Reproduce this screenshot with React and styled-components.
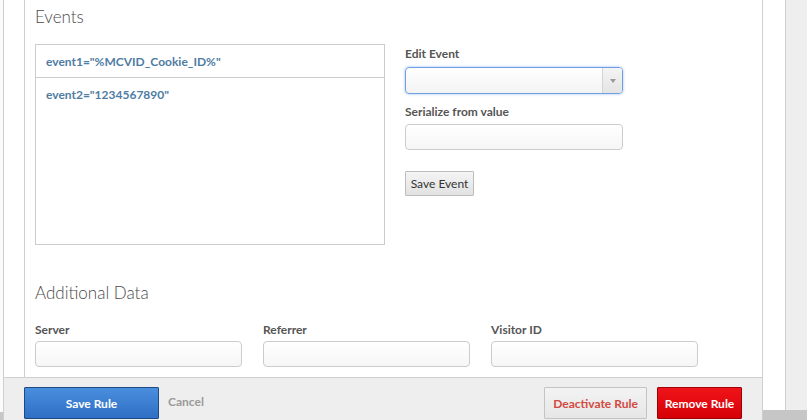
import React from "react";
import styled, { createGlobalStyle } from "styled-components";

const Global = createGlobalStyle`
  html, body { margin: 0; padding: 0; }
  body { font-family: Lato, "Open Sans", sans-serif; background: #eeeeee; }
  * { box-sizing: border-box; }
`;

const Root = styled.div`
  display: flex;
  width: 807px;
  height: 420px;
  overflow: hidden;
  background: #eeeeee;
`;

const LeftEdge = styled.div`
  width: 3px;
  display: flex;
  flex-direction: column;
  background: #fbfbfb;
`;

const ScrollStub = styled.div`
  margin-top: auto;
  height: ${(p) => p.$h}px;
  background: #c6c6c6;
`;

const Main = styled.div`
  width: 760px;
  display: flex;
  flex-direction: column;
  border-left: 1px solid #cfcfcf;
  border-right: 1px solid #cfcfcf;
  background: #fff;
`;

const ContentWrap = styled.div`
  flex: 1;
  padding-left: 20px;
  display: flex;
`;

const Content = styled.div`
  flex: 1;
  border-left: 1px solid #cfcfcf;
  padding: 6px 0 0 10px;
`;

const Heading = styled.h2`
  margin: 0;
  font-weight: 300;
  font-size: 17px;
  line-height: 22px;
  color: #4a4a4a;
`;

const EventsRow = styled.div`
  display: flex;
  gap: 20px;
  margin-top: 16px;
`;

const EventList = styled.div`
  width: 350px;
  height: 201px;
  border: 1px solid #cccccc;
`;

const EventItem = styled.div`
  height: 33px;
  padding: 0 10px;
  display: flex;
  align-items: center;
  font-size: 12px;
  font-weight: 700;
  color: #4f7ca3;
  border-bottom: ${(p) => (p.$divider ? "1px solid #cccccc" : "none")};
`;

const Form = styled.div`
  display: flex;
  flex-direction: column;
  width: 218px;
  padding-top: 2px;
`;

const Label = styled.label`
  display: block;
  font-size: 12px;
  font-weight: 700;
  color: #555555;
  line-height: 16px;
  margin-bottom: ${(p) => p.$mb ?? 5}px;
`;

const Select = styled.div`
  height: 27px;
  width: 218px;
  border: 1px solid #6f9fe0;
  border-radius: 4px;
  box-shadow: 0 0 3px rgba(80, 140, 230, 0.55);
  background: linear-gradient(#ffffff, #f3f3f3);
  display: flex;
  justify-content: flex-end;
  margin-bottom: 10px;
`;

const SelectArrow = styled.div`
  width: 20px;
  border-left: 1px solid #d4d4d4;
  background: linear-gradient(#f4f4f4, #e4e4e4);
  border-radius: 0 3px 3px 0;
  display: flex;
  align-items: center;
  justify-content: center;
  &::after {
    content: "";
    border-left: 3px solid transparent;
    border-right: 3px solid transparent;
    border-top: 4px solid #999;
  }
`;

const Input = styled.div`
  height: ${(p) => p.$h ?? 26}px;
  width: ${(p) => p.$w}px;
  border: 1px solid #cccccc;
  border-radius: 4px;
  background: linear-gradient(#ffffff, #f6f6f6);
`;

const SmallButton = styled.button`
  margin-top: 21px;
  align-self: flex-start;
  height: 25px;
  width: 69px;
  padding: 0;
  font-family: inherit;
  font-size: 12px;
  color: #333;
  background: linear-gradient(#f4f4f4, #e2e2e2);
  border: 1px solid #bdbdbd;
  border-radius: 1px;
`;

const Section = styled.div`
  margin-top: 37px;
`;

const FieldRow = styled.div`
  display: flex;
  gap: 21px;
  margin-top: 18px;
`;

const Field = styled.div`
  display: flex;
  flex-direction: column;
`;

const Footer = styled.div`
  height: 43px;
  border-top: 1px solid #cfcfcf;
  background: #eeeeee;
  display: flex;
  align-items: flex-start;
  padding: 9px 20px 0 20px;
`;

const FooterButton = styled.button`
  height: 32px;
  font-family: inherit;
  font-size: 12px;
  font-weight: 700;
  padding: 0;
  width: ${(p) => p.$w}px;
  margin-left: ${(p) => p.$ml ?? 0}px;
  color: ${(p) => p.$color};
  background: ${(p) => p.$bg};
  border: 1px solid ${(p) => p.$border};
  border-radius: 1px;
`;

const CancelLink = styled.span`
  font-size: 12px;
  font-weight: 700;
  color: #9a9a9a;
  margin: 7px 0 0 9px;
`;

const Spacer = styled.div`
  flex: 1;
`;

const RightArea = styled.div`
  width: 44px;
  display: flex;
  flex-direction: column;
`;

const RightTop = styled.div`
  height: 410px;
  display: flex;
`;

const WhiteStrip = styled.div`
  width: 23px;
  background: #fff;
  border-right: 1px solid #cfcfcf;
`;

const GrayFill = styled.div`
  flex: 1;
  background: #eeeeee;
`;

const BottomBar = styled.div`
  flex: 1;
  background: #c6c6c6;
`;

export default function App() {
  return (
    <>
      <Global />
      <Root>
        <LeftEdge>
          <ScrollStub $h={8} />
        </LeftEdge>
        <Main>
          <ContentWrap>
            <Content>
              <Heading>Events</Heading>
              <EventsRow>
                <EventList>
                  <EventItem $divider>event1="%MCVID_Cookie_ID%"</EventItem>
                  <EventItem>event2="1234567890"</EventItem>
                </EventList>
                <Form>
                  <Label $mb={5}>Edit Event</Label>
                  <Select>
                    <SelectArrow />
                  </Select>
                  <Label $mb={4}>Serialize from value</Label>
                  <Input $w={218} />
                  <SmallButton>Save Event</SmallButton>
                </Form>
              </EventsRow>
              <Section>
                <Heading>Additional Data</Heading>
                <FieldRow>
                  <Field>
                    <Label $mb={3}>Server</Label>
                    <Input $w={207} />
                  </Field>
                  <Field>
                    <Label $mb={3}>Referrer</Label>
                    <Input $w={207} />
                  </Field>
                  <Field>
                    <Label $mb={3}>Visitor ID</Label>
                    <Input $w={207} />
                  </Field>
                </FieldRow>
              </Section>
            </Content>
          </ContentWrap>
          <Footer>
            <FooterButton
              $w={135}
              $color="#fff"
              $bg="linear-gradient(#4a8ede, #2f6fc4)"
              $border="#1d4a85"
            >
              Save Rule
            </FooterButton>
            <CancelLink>Cancel</CancelLink>
            <Spacer />
            <FooterButton
              $w={103}
              $color="#d2493f"
              $bg="linear-gradient(#f3f3f3, #e6e6e6)"
              $border="#c4c4c4"
            >
              Deactivate Rule
            </FooterButton>
            <FooterButton
              $w={85}
              $ml={10}
              $color="#fff"
              $bg="linear-gradient(#f0141a, #d40006)"
              $border="#9c0006"
            >
              Remove Rule
            </FooterButton>
          </Footer>
        </Main>
        <RightArea>
          <RightTop>
            <WhiteStrip />
            <GrayFill />
          </RightTop>
          <BottomBar />
        </RightArea>
      </Root>
    </>
  );
}
